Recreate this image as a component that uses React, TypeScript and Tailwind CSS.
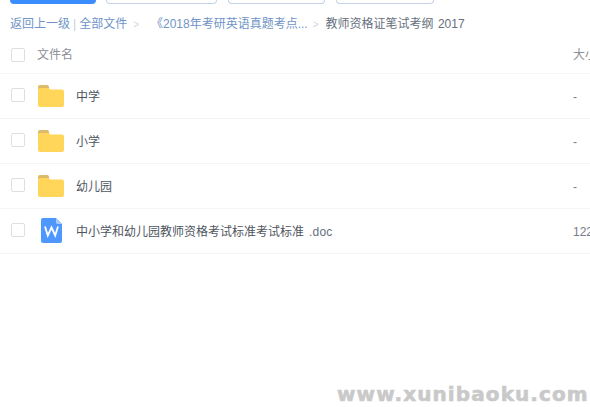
import React from "react";

interface FileRow {
    name: string;
    ext?: string;
    size: string;
    isDoc?: boolean;
}

const rows: FileRow[] = [
    {name: "中学", size: "-"},
    {name: "小学", size: "-"},
    {name: "幼儿园", size: "-"},
    {name: "中小学和幼儿园教师资格考试标准考试标准", ext: ".doc", size: "122", isDoc: true},
];

const FolderIcon = () => (
    <svg width="26" height="22" viewBox="0 0 26 22" className="block">
        <path d="M0 2a2 2 0 0 1 2-2h7a2 2 0 0 1 2 2v2H0z" fill="#dcbb68"/>
        <path d="M0 5a2 2 0 0 1 2-2h9l1 1.500H24a2 2 0 0 1 2 2V20a2 2 0 0 1-2 2H2a2 2 0 0 1-2-2z" fill="#ffd659"/>
    </svg>
);

const DocIcon = () => (
    <svg width="21" height="25" viewBox="0 0 21 25" className="block">
        <path d="M2 0h13l6 6v17a2 2 0 0 1-2 2H2a2 2 0 0 1-2-2V2a2 2 0 0 1 2-2z" fill="#4d97ff"/>
        <path d="M15 0l6 6h-4.500a1.500 1.500 0 0 1-1.500-1.500z" fill="#a6cbff"/>
        <path d="M4 8.500l2.800 9 3.700-8 3.700 8 2.800-9" fill="none" stroke="#fff" strokeWidth="1.800"/>
    </svg>
);

const Checkbox = () => (
    <span className="block w-[14px] h-[14px] border border-[#dcdfe3] rounded-[2px] bg-white"/>
);

const App = () => {
    return (
        <div
            className="relative w-[590px] h-[407px] overflow-hidden bg-white text-[12px] text-[#424e67]"
            style={{fontFamily: '"Liberation Sans", "Noto Sans CJK SC", sans-serif'}}
        >
            <div className="flex gap-[10px] pl-[10px] h-[4px] overflow-hidden">
                <div className="w-[86px] h-[4px] bg-[#3b8cff] rounded-b-[4px]"/>
                <div className="w-[111px] h-[4px] border-b border-x border-[#c3d3ea] rounded-b-[4px]"/>
                <div className="w-[97px] h-[4px] border-b border-x border-[#c3d3ea] rounded-b-[4px] ml-[1px]"/>
                <div className="w-[98px] h-[4px] border-b border-x border-[#c3d3ea] rounded-b-[4px] ml-[1px]"/>
            </div>

            <div className="flex items-center h-[20px] mt-[10px] pl-[10px] whitespace-nowrap">
                <span className="text-[#6f94c7]">返回上一级</span>
                <span className="text-[#c4cfdd] mx-[3px]">|</span>
                <span className="text-[#6f94c7]">全部文件</span>
                <span className="text-[#d0d6de] ml-[6px] text-[10px]">&gt;</span>
                <span className="text-[#6f94c7] ml-[12px]">《2018年考研英语真题考点...</span>
                <span className="text-[#d0d6de] ml-[5px] text-[10px]">&gt;</span>
                <span className="text-[#666f7d] ml-[7px] [word-spacing:1px]">教师资格证笔试考纲 2017</span>
            </div>

            <div className="flex items-center h-[38px] mt-[2px] border-b border-[#f7f7f8] text-[#8c8f96]">
                <span className="ml-[11px]"><Checkbox/></span>
                <span className="ml-[12px] flex-1">文件名</span>
                <span className="w-[17px] overflow-hidden whitespace-nowrap">大小</span>
            </div>

            {rows.map((row) => (
                <div key={row.name} className="flex items-center h-[45px] border-b border-[#f3f4f6]">
                    <span className="ml-[11px] -mt-[2px]"><Checkbox/></span>
                    <span className={`flex justify-center w-[26px] ml-[13px] ${row.isDoc ? "-mt-[1px]" : "-mt-[1px]"}`}>
                        {row.isDoc ? <DocIcon/> : <FolderIcon/>}
                    </span>
                    <span className="ml-[12px] flex-1 flex gap-[5px] mt-[1px] text-[#4e5560] whitespace-nowrap">
                        <span>{row.name}</span>
                        {row.ext && <span className="text-[#666f7d] tracking-[0.2px]">{row.ext}</span>}
                    </span>
                    <span className="w-[17px] overflow-hidden whitespace-nowrap mt-[1px] text-[#777c85]">{row.size}</span>
                </div>
            ))}

            <div
                className="absolute left-[337px] top-[384px] text-[20px] leading-[20px] font-bold text-[#c9c9c9] whitespace-nowrap tracking-[1.1px] [-webkit-text-stroke:0.6px_#c9c9c9]"
                style={{fontFamily: '"DejaVu Sans", sans-serif'}}
            >
                www.xunibaoku.com
            </div>
        </div>
    );
};

export default App;
